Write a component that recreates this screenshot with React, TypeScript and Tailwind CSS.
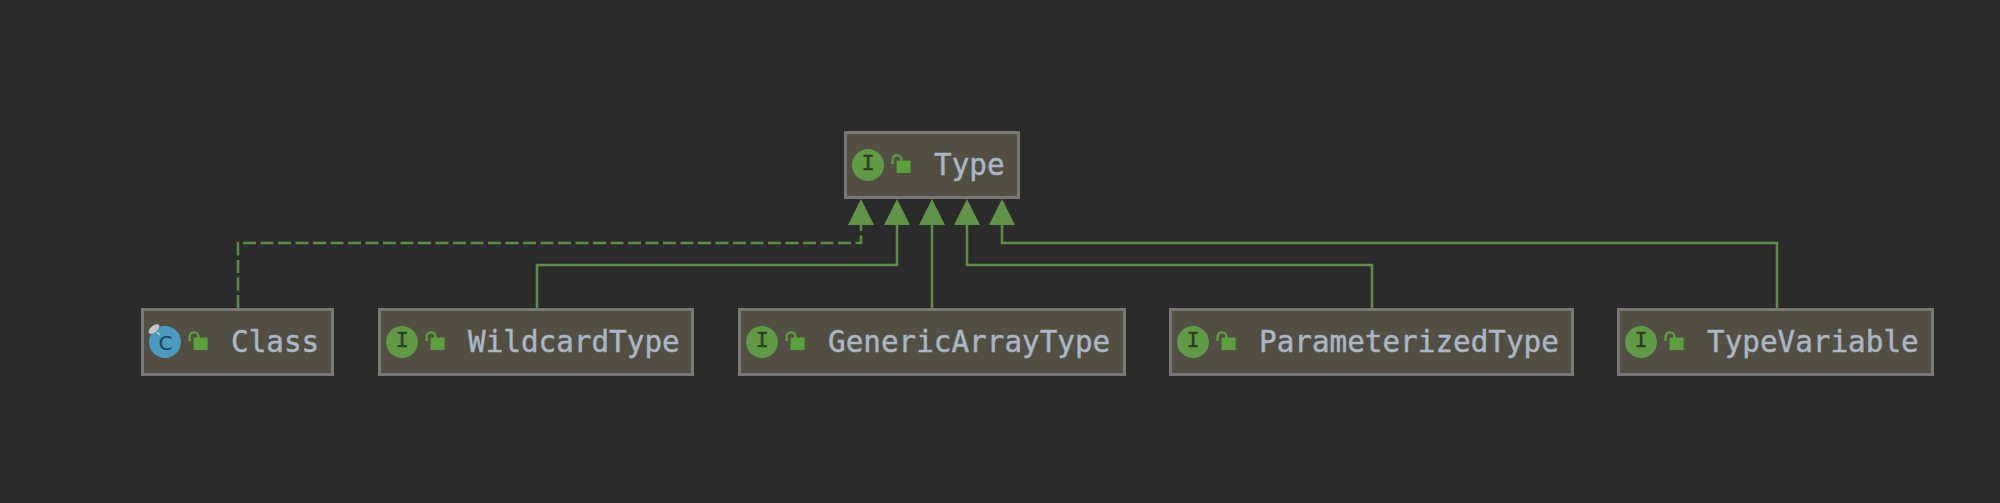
const TEXT = "text-[#a9b7c6] text-[29.3px] leading-none whitespace-pre [-webkit-text-stroke:0.45px_#a9b7c6] [font-family:'DejaVu_Sans_Mono','Liberation_Mono',monospace]";

function Lock() {
  return (
    <svg width="20" height="20" viewBox="0 0 20 20" className="shrink-0">
      <path d="M1.6 10 V5.6 a4.4 4.4 0 0 1 8.8 0 V7" fill="none" stroke="#5aa03c" strokeWidth="2.4" />
      <rect x="5.6" y="6.6" width="14" height="12.4" fill="#5aa03c" />
    </svg>
  );
}

function InterfaceIcon() {
  return (
    <div className="w-[32px] h-[32px] rounded-full bg-[#5f9a45] flex items-center justify-center shrink-0">
      <span className="text-[#2c3f26] text-[22px] leading-none [-webkit-text-stroke:0.4px_#2c3f26] [font-family:'Liberation_Mono',monospace]">I</span>
    </div>
  );
}

function ClassIcon() {
  return (
    <div className="relative w-[32px] h-[32px] rounded-full bg-[#4a9bbd] flex items-center justify-center shrink-0">
      <span className="text-[#1c4256] text-[20px] leading-none mt-[1px] ml-[1px] [font-family:'DejaVu_Sans',sans-serif]">C</span>
      <svg width="18" height="18" viewBox="0 0 18 18" className="absolute -left-[3px] -top-[4px]">
        <ellipse cx="8" cy="7" rx="6.5" ry="3.2" transform="rotate(-40 8 7)" fill="#c4c6c8" />
        <path d="M11 10 L14 13" stroke="#c4c6c8" strokeWidth="1.5" />
      </svg>
    </div>
  );
}

function Node({ name, width, cls = false }: { name: string; width: string; cls?: boolean }) {
  return (
    <div className={`${width} h-[68px] bg-[#524e42] border-[3px] border-[#777775] flex items-center pl-[5px] shrink-0`}>
      {cls ? <ClassIcon /> : <InterfaceIcon />}
      <div className="ml-[7px] -mt-[2px]"><Lock /></div>
      <span className={`${TEXT} ml-[23px] mt-[1px]`}>{name}</span>
    </div>
  );
}

function Edges() {
  const g = "#5b8f45";
  return (
    <svg width="2000" height="503" viewBox="0 0 2000 503" className="absolute left-0 top-0 pointer-events-none">
      <g fill="none" stroke={g} strokeWidth="2.5">
        <path d="M238 308 V243 H861 V225" strokeDasharray="13 4.5" />
        <path d="M537 308 V265 H897 V225" />
        <path d="M932 308 V225" />
        <path d="M1372 308 V265 H967 V225" />
        <path d="M1777 308 V243 H1002 V225" />
      </g>
      <g fill="#5f9447">
        <path d="M861 199 L874 225 H848 Z" />
        <path d="M897 199 L910 225 H884 Z" />
        <path d="M932 199 L945 225 H919 Z" />
        <path d="M967 199 L980 225 H954 Z" />
        <path d="M1002 199 L1015 225 H989 Z" />
      </g>
    </svg>
  );
}

export default function App() {
  return (
    <div className="relative w-[2000px] h-[503px] bg-[#2b2b2b] overflow-hidden pt-[131px]">
      <div className="ml-[844px]">
        <Node name="Type" width="w-[176px]" />
      </div>
      <div className="flex mt-[109px] ml-[141px]">
        <Node name="Class" width="w-[193px]" cls />
        <div className="ml-[44px]"><Node name="WildcardType" width="w-[316px]" /></div>
        <div className="ml-[44px]"><Node name="GenericArrayType" width="w-[388px]" /></div>
        <div className="ml-[43px]"><Node name="ParameterizedType" width="w-[405px]" /></div>
        <div className="ml-[43px]"><Node name="TypeVariable" width="w-[317px]" /></div>
      </div>
      <Edges />
    </div>
  );
}
